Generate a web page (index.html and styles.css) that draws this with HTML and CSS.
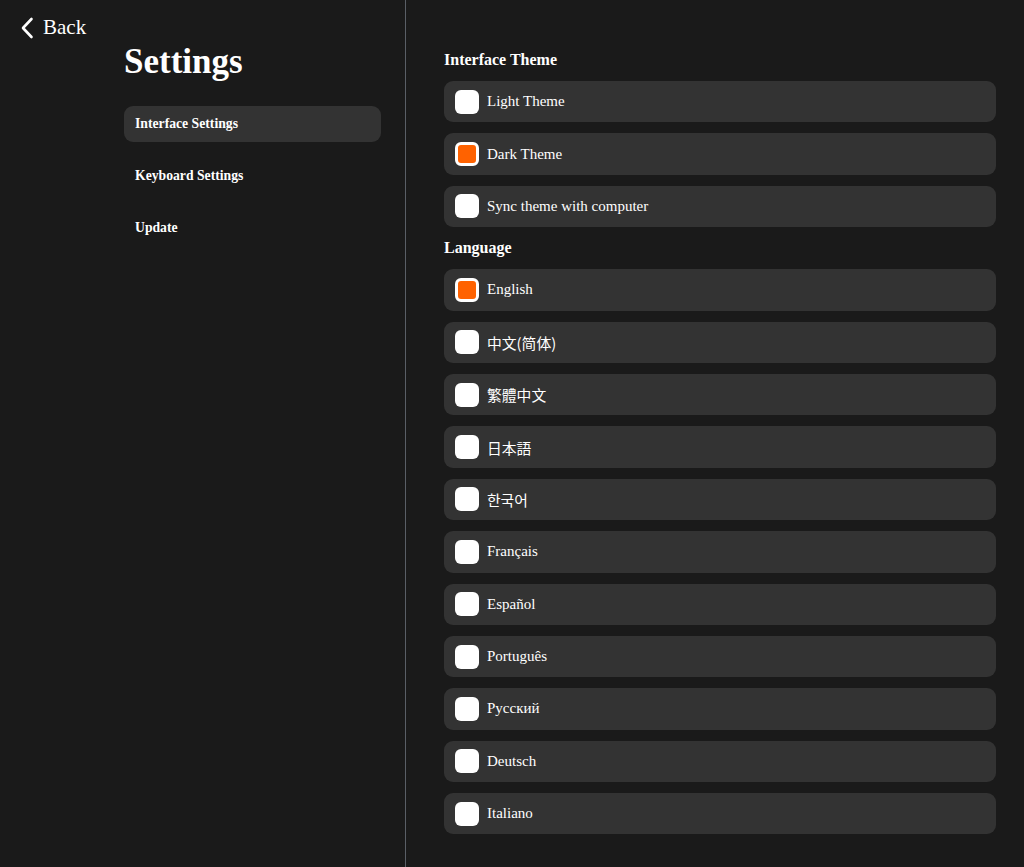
FILE: index.html
```html
<!DOCTYPE html>
<html lang="en">
<head>
    <meta charset="UTF-8">
    <meta name="viewport" content="width=device-width, initial-scale=1.0">
    <title>Settings</title>
    <link rel="stylesheet" href="styles.css">
</head>
<body>
    <aside class="sidebar">
        <a class="back" href="#">
            <svg class="back-icon" width="14" height="22" viewBox="0 0 14 22">
                <path d="M11.5 2 L3 11 L11.5 20" fill="none" stroke="#fff" stroke-width="2.6" stroke-linecap="round" stroke-linejoin="round"/>
            </svg>
            <span>Back</span>
        </a>
        <div class="side-inner">
            <h1>Settings</h1>
            <nav class="menu">
                <div class="menu-item active">Interface Settings</div>
                <div class="menu-item">Keyboard Settings</div>
                <div class="menu-item">Update</div>
            </nav>
        </div>
    </aside>

    <main class="content">
        <h3>Interface Theme</h3>
        <div class="options">
            <div class="option"><span class="box"></span>Light Theme</div>
            <div class="option"><span class="box checked"></span>Dark Theme</div>
            <div class="option"><span class="box"></span>Sync theme with computer</div>
        </div>

        <h3>Language</h3>
        <div class="options">
            <div class="option"><span class="box checked"></span>English</div>
            <div class="option cjk"><span class="box"></span>中文(简体)</div>
            <div class="option cjk tc"><span class="box"></span>繁體中文</div>
            <div class="option cjk jp"><span class="box"></span>日本語</div>
            <div class="option cjk kr"><span class="box"></span>한국어</div>
            <div class="option"><span class="box"></span>Français</div>
            <div class="option"><span class="box"></span>Español</div>
            <div class="option"><span class="box"></span>Português</div>
            <div class="option"><span class="box"></span>Русский</div>
            <div class="option"><span class="box"></span>Deutsch</div>
            <div class="option"><span class="box"></span>Italiano</div>
        </div>
    </main>
</body>
</html>
```

FILE: styles.css
```css
body {
    margin: 0;
    min-height: 100vh;
    display: flex;
    background-color: #1a1a1a;
    color: #fff;
    font-family: "Liberation Serif", "Times New Roman", "Noto Sans CJK SC", serif;
}

.sidebar {
    width: 406px;
    flex-shrink: 0;
    box-sizing: border-box;
    border-right: 1px solid #5a5f66;
    padding: 15px 24px 0 20px;
}

.back {
    display: flex;
    align-items: center;
    gap: 9px;
    color: #fff;
    text-decoration: none;
    font-size: 21px;
}

.side-inner {
    margin-left: 104px;
}

h1 {
    font-size: 35px;
    font-weight: bold;
    margin: 2px 0 24px;
    line-height: 40px;
}

.menu {
    display: flex;
    flex-direction: column;
    gap: 16px;
}

.menu-item {
    height: 36px;
    line-height: 36px;
    padding: 0 11px;
    border-radius: 9px;
    font-size: 13.7px;
    font-weight: bold;
}

.menu-item.active {
    background: #333;
}

.content {
    flex: 1;
    padding: 49px 28px 0 38px;
}

h3 {
    font-size: 16px;
    font-weight: bold;
    margin: 0 0 11px;
    line-height: 21px;
}

.options {
    display: flex;
    flex-direction: column;
    gap: 11px;
    margin-bottom: 10px;
}

.option {
    height: 41.4px;
    display: flex;
    align-items: center;
    padding: 0 11px;
    background: #333;
    border-radius: 9px;
    font-size: 15px;
}

.option.cjk {
    font-family: "Noto Sans CJK SC", sans-serif;
    font-size: 14.8px;
}

.option.tc { font-family: "Noto Sans CJK TC", sans-serif; }
.option.jp { font-family: "Noto Sans CJK JP", sans-serif; }
.option.kr { font-family: "Noto Sans CJK KR", sans-serif; }

.box {
    width: 24px;
    height: 24px;
    box-sizing: border-box;
    background: #fff;
    border-radius: 6px;
    margin-right: 8px;
    flex-shrink: 0;
}

.box.checked {
    border: 3px solid #fff;
    background: #ff6200;
}
```
